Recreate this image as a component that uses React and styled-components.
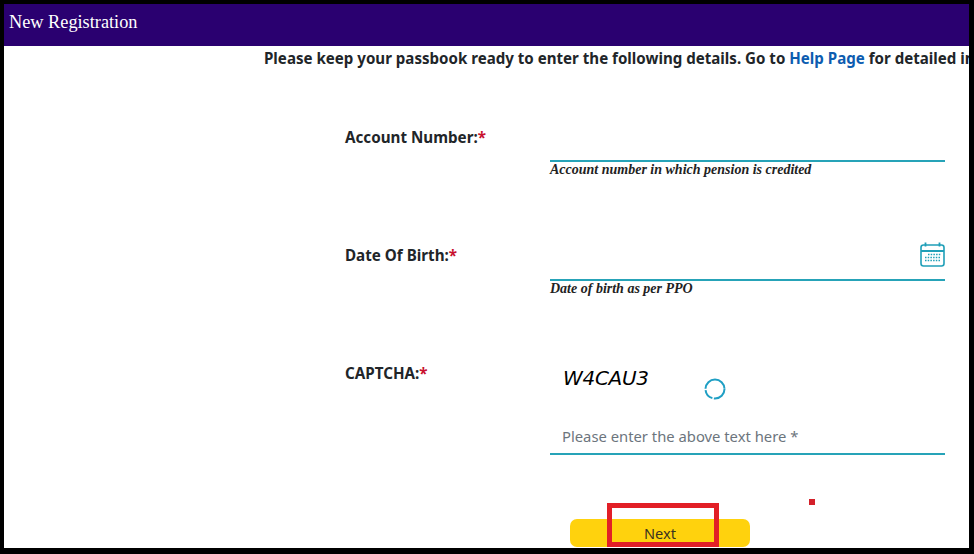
import React from "react";
import styled, { createGlobalStyle } from "styled-components";

const Global = createGlobalStyle`
  html, body { margin: 0; padding: 0; background: #000; }
  * { box-sizing: border-box; }
`;

const Frame = styled.div`
  width: 974px;
  height: 554px;
  background: #000;
  padding: 4px 5px 6px 4px;
`;

const Screen = styled.div`
  position: relative;
  width: 965px;
  height: 544px;
  background: #fff;
  overflow: hidden;
  font-family: "Noto Sans", "Open Sans", sans-serif;
  color: #212529;
`;

const Header = styled.header`
  height: 42px;
  background: #2a0070;
  color: #fff;
  font-family: "Liberation Serif", serif;
  font-size: 18.3px;
  line-height: 36px;
  padding-left: 5px;
`;

const Intro = styled.p`
  margin: 0;
  padding: 1px 0 0 260px;
  height: 73px;
  font-size: 15.1px;
  font-weight: 700;
  line-height: 22px;
  white-space: nowrap;
`;

const HelpLink = styled.a`
  color: #0d5cb0;
`;

const Form = styled.form`
  display: grid;
  grid-template-columns: 205px 395px;
  grid-auto-rows: 118px;
  margin-left: 341px;
  padding-top: 8px;
`;

const Label = styled.label`
  font-size: 15.2px;
  font-weight: 700;
  line-height: 20px;
`;

const Required = styled.span`
  color: #c8102e;
`;

const Field = styled.div`
  display: flex;
  flex-direction: column;
`;

const InputLine = styled.div`
  display: flex;
  justify-content: flex-end;
  align-items: flex-end;
  height: ${(p) => p.$height}px;
  border-bottom: 2px solid #26a3b8;
  padding-bottom: 12px;
`;

const Hint = styled.em`
  font-family: "Liberation Serif", serif;
  font-size: 14px;
  font-weight: 700;
  line-height: 15px;
  color: #222;
`;

const CaptchaRow = styled.div`
  display: flex;
  height: 40px;
  margin-top: 2px;
`;

const CaptchaText = styled.span`
  font-family: "DejaVu Sans", sans-serif;
  font-style: italic;
  font-size: 20px;
  line-height: 26px;
  color: #000;
  margin-left: 13px;
  width: 141px;
  letter-spacing: -0.3px;
`;

const SpinnerIcon = styled.svg`
  margin-top: 13px;
`;

const CaptchaInput = styled.div`
  height: 37px;
  padding: 8px 0 0 12px;
  border-bottom: 2px solid #26a3b8;
  margin-top: 13px;
  font-size: 14.8px;
  line-height: 20px;
  color: #6c757d;
`;

const Actions = styled.div`
  grid-column: 2;
  margin-top: 38px;
  padding-left: 20px;
`;

const NextButton = styled.button`
  display: block;
  width: 180px;
  height: 28px;
  border: 0;
  border-radius: 7px;
  background: #ffd20d;
  color: #3a3320;
  font-family: "Noto Sans", sans-serif;
  font-size: 14.6px;
  line-height: 20px;
  padding: 0;
`;

const Highlight = styled.div`
  position: absolute;
  left: 603px;
  top: 499px;
  width: 112px;
  height: 44px;
  border: 5px solid #e21f26;
`;

const Dot = styled.div`
  position: absolute;
  left: 805px;
  top: 495px;
  width: 6px;
  height: 6px;
  background: #d4202a;
`;

const CalendarIcon = () => (
  <svg width="25" height="25" viewBox="0 0 25 25" fill="none" stroke="#1f9fb8" strokeWidth="1.6">
    <rect x="1" y="3" width="23" height="21" rx="2.5" />
    <path d="M1 9h23" strokeWidth="2" />
    <path d="M5.5 0.5v4M19.5 0.5v4" strokeWidth="1.8" />
    <path d="M8 12.5h13M5 15.5h16M5 18.5h16" strokeWidth="1.3" strokeDasharray="1.5 1.2" />
  </svg>
);

const Spinner = () => (
  <SpinnerIcon width="22" height="22" viewBox="0 0 22 22" fill="none" stroke="#1f9fc4" strokeWidth="2">
    <circle cx="11" cy="11" r="9.5" strokeDasharray="16 1.5 11 1.5 29 1" />
  </SpinnerIcon>
);

export default function App() {
  return (
    <Frame>
      <Global />
      <Screen>
        <Header>New Registration</Header>
        <Intro>
          Please keep your passbook ready to enter the following details. Go to <HelpLink>Help Page</HelpLink> for detailed information.
        </Intro>
        <Form>
          <Label>Account Number:<Required>*</Required></Label>
          <Field>
            <InputLine $height={35} />
            <Hint>Account number in which pension is credited</Hint>
          </Field>
          <Label>Date Of Birth:<Required>*</Required></Label>
          <Field>
            <InputLine $height={36}>
              <CalendarIcon />
            </InputLine>
            <Hint>Date of birth as per PPO</Hint>
          </Field>
          <Label>CAPTCHA:<Required>*</Required></Label>
          <Field>
            <CaptchaRow>
              <CaptchaText>W4CAU3</CaptchaText>
              <Spinner />
            </CaptchaRow>
            <CaptchaInput>Please enter the above text here *</CaptchaInput>
          </Field>
          <Actions>
            <NextButton type="button">Next</NextButton>
          </Actions>
        </Form>
        <Highlight />
        <Dot />
      </Screen>
    </Frame>
  );
}
